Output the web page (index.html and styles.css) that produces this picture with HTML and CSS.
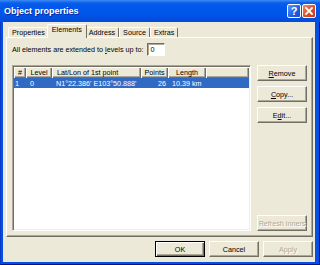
FILE: index.html
```html
<!DOCTYPE html>
<html lang="en">
<head>
    <meta charset="UTF-8">
    <title>Object properties</title>
    <link rel="stylesheet" href="styles.css">
</head>
<body>
    <div class="window">
        <div class="titlebar">
            <span class="title">Object properties</span>
            <div class="caption-btns">
                <span class="cbtn help">?</span>
                <span class="cbtn close">
                    <svg width="8" height="8" viewBox="0 0 8 8"><path d="M1 1L7 7M7 1L1 7" stroke="#fff" stroke-width="1.8" stroke-linecap="square"/></svg>
                </span>
            </div>
        </div>
        <div class="client">
            <div class="tabs">
                <span class="tab">Properties</span>
                <span class="tab active">Elements</span>
                <span class="tab">Address</span>
                <span class="tab">Source</span>
                <span class="tab">Extras</span>
            </div>
            <div class="panel">
                <div class="levels">
                    <span>All elements are extended to <u>l</u>evels up to:</span>
                    <span class="input">0</span>
                </div>
                <div class="content">
                    <div class="listview">
                        <table>
                            <colgroup>
                                <col style="width:12px">
                                <col style="width:26px">
                                <col style="width:89px">
                                <col style="width:27px">
                                <col style="width:38px">
                                <col>
                            </colgroup>
                            <thead>
                                <tr>
                                    <th>#</th>
                                    <th>Level</th>
                                    <th class="left">Lat/Lon of 1st point</th>
                                    <th>Points</th>
                                    <th>Length</th>
                                    <th></th>
                                </tr>
                            </thead>
                            <tbody>
                                <tr class="selected">
                                    <td class="c-num">1</td>
                                    <td>0</td>
                                    <td>N1°22.386' E103°50.888'</td>
                                    <td class="right">26</td>
                                    <td>10.39 km</td>
                                    <td></td>
                                </tr>
                            </tbody>
                        </table>
                    </div>
                    <div class="side">
                        <button class="btn"><u>R</u>emove</button>
                        <button class="btn"><u>C</u>opy...</button>
                        <button class="btn">E<u>d</u>it...</button>
                        <button class="btn refresh" disabled>Refresh inners</button>
                    </div>
                </div>
            </div>
            <div class="footer">
                <button class="btn default">OK</button>
                <button class="btn">Cancel</button>
                <button class="btn" disabled>Apply</button>
            </div>
        </div>
    </div>
</body>
</html>
```

FILE: styles.css
```css
* {
    box-sizing: border-box;
}

body {
    margin: 0;
    font-family: "Liberation Sans", Arial, sans-serif;
    font-size: 7.2px;
    color: #000;
}

.window {
    width: 320px;
    height: 265px;
    display: flex;
    flex-direction: column;
    background: #0550E2;
    border-left: 1px solid #0A3BC8;
    border-right: 1px solid #00138C;
    border-bottom: 1px solid #00138C;
}

.titlebar {
    height: 22px;
    flex: none;
    display: flex;
    align-items: center;
    justify-content: space-between;
    padding: 0 4px 0 4px;
    background: linear-gradient(#3D8DF5 0, #0A5EEA 3px, #0058EE 7px, #0055E8 14px, #004BDC 22px);
    margin-left: -1px;
    margin-right: -1px;
}

.title {
    color: #fff;
    font-weight: bold;
    font-size: 9px;
    text-shadow: 1px 1px #0B2A9A;
    margin-top: -1px;
}

.caption-btns {
    display: flex;
    gap: 1px;
}

.cbtn {
    width: 14px;
    height: 14px;
    border: 1px solid #fff;
    border-radius: 2px;
    display: flex;
    align-items: center;
    justify-content: center;
    color: #fff;
}

.help {
    background: linear-gradient(135deg, #5A9BFA, #1F5DE0 60%, #1A4BCB);
    font-weight: bold;
    font-size: 11px;
}

.close {
    background: linear-gradient(135deg, #F08D6C, #E0522C 50%, #C23C1A);
}

.client {
    flex: 1;
    margin: 0 4px 2px 2px;
    background: #ECE9D8;
    display: flex;
    flex-direction: column;
}

.tabs {
    height: 15px;
    flex: none;
    display: flex;
    align-items: flex-end;
    padding-left: 5px;
    position: relative;
    z-index: 1;
}

.tab {
    height: 10px;
    padding: 0 3px;
    border: 1px solid #fff;
    border-right-color: #716F64;
    border-bottom: none;
    line-height: 9px;
    border-radius: 2px 2px 0 0;
}

.tab.active {
    height: 14px;
    margin: 0 -2px -1px;
    padding: 0 4px;
    line-height: 10px;
    background: #ECE9D8;
    position: relative;
}

.panel {
    height: 200px;
    flex: none;
    margin: 0 2px 0 3px;
    border: 1px solid;
    border-color: #fff #716F64 #716F64 #fff;
    box-shadow: inset -1px -1px #ACA899;
    padding: 5px 5px 0 5px;
    display: flex;
    flex-direction: column;
}

.levels {
    height: 13px;
    display: flex;
    align-items: center;
}

.input {
    margin-left: 4px;
    width: 18px;
    height: 13px;
    background: #fff;
    border: 1px solid;
    border-color: #716F64 #fff #fff #716F64;
    box-shadow: inset 1px 1px #ACA899;
    padding-left: 2px;
    line-height: 11px;
}

.content {
    display: flex;
    gap: 6px;
    margin-top: 9px;
}

.listview {
    width: 239px;
    height: 166px;
    background: #fff;
    border: 1px solid;
    border-color: #ACA899 #fff #fff #ACA899;
    box-shadow: inset 1px 1px #716F64, inset -1px -1px #F1EFE2;
    padding: 1px 1px 0 1px;
}

table {
    width: 100%;
    border-collapse: collapse;
    table-layout: fixed;
}

th {
    height: 11px;
    padding: 0;
    font-weight: normal;
    background: #ECE9D8;
    box-shadow: inset 1px 1px #fff, inset -1px -1px #716F64, inset -2px -2px #ACA899;
    text-align: center;
    white-space: nowrap;
    overflow: hidden;
}

th.left {
    text-align: left;
    padding-left: 5px;
}

td {
    height: 10px;
    padding: 0 0 0 4px;
    white-space: nowrap;
    overflow: hidden;
}

td.c-num {
    padding-left: 1px;
}

td.right {
    text-align: right;
    padding: 0 2px 0 0;
}

tr.selected td {
    background: #316AC5;
    color: #fff;
}

.side {
    display: flex;
    flex-direction: column;
    gap: 5px;
    height: 166px;
}

.btn {
    width: 50px;
    height: 16px;
    padding: 0;
    font: inherit;
    color: #000;
    background: #ECE9D8;
    border: 1px solid;
    border-color: #fff #716F64 #716F64 #fff;
    box-shadow: inset -1px -1px #ACA899;
}

.btn:disabled {
    color: #ACA899;
    text-shadow: 1px 1px #fff;
}

.refresh {
    margin-top: auto;
}

.footer {
    flex: 1;
    display: flex;
    justify-content: flex-end;
    gap: 4px;
    padding: 4px 2px 0 0;
}

.btn.default {
    border-color: #000;
    box-shadow: inset 1px 1px #fff, inset -1px -1px #716F64, inset -2px -2px #ACA899;
}
```
